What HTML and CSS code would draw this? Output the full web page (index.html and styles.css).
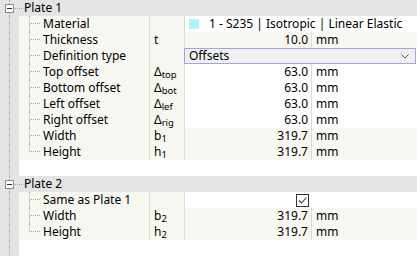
FILE: index.html
```html
<!DOCTYPE html>
<html>
<head>
    <meta name="viewport" content="width=device-width, initial-scale=1">
    <link rel="stylesheet" href="styles.css">
</head>
<body>

<div class="panel">
    <div class="head">
        <div class="tg"><span class="vl"></span><span class="box"></span><span class="vl"></span></div>
        <span class="hl"></span>
        <span class="title">Plate 1</span>
    </div>
    <div class="row">
        <div class="gut"><span class="vl"></span></div>
        <div class="name"><span class="br"><i></i><i></i></span>Material</div>
        <div class="sym"></div>
        <div class="val mat"><span class="swatch"></span>1 - S235 | Isotropic | Linear Elastic</div>
    </div>
    <div class="row ro">
        <div class="gut"><span class="vl"></span></div>
        <div class="name"><span class="br"><i></i><i></i></span>Thickness</div>
        <div class="sym">t</div>
        <div class="val"><span class="num">10.0</span><span class="unit">mm</span></div>
    </div>
    <div class="row">
        <div class="gut"><span class="vl"></span></div>
        <div class="name"><span class="br"><i></i><i></i></span>Definition type</div>
        <div class="sym"></div>
        <div class="val"><div class="select">Offsets
            <svg width="8" height="5" viewBox="0 0 8 5"><path d="M0.5 0.5 L4 4 L7.5 0.5" fill="none" stroke="#5a5a5a" stroke-width="1"/></svg>
        </div></div>
    </div>
    <div class="row">
        <div class="gut"><span class="vl"></span></div>
        <div class="name"><span class="br"><i></i><i></i></span>Top offset</div>
        <div class="sym">&Delta;<sub>top</sub></div>
        <div class="val"><span class="num">63.0</span><span class="unit">mm</span></div>
    </div>
    <div class="row">
        <div class="gut"><span class="vl"></span></div>
        <div class="name"><span class="br"><i></i><i></i></span>Bottom offset</div>
        <div class="sym">&Delta;<sub>bot</sub></div>
        <div class="val"><span class="num">63.0</span><span class="unit">mm</span></div>
    </div>
    <div class="row">
        <div class="gut"><span class="vl"></span></div>
        <div class="name"><span class="br"><i></i><i></i></span>Left offset</div>
        <div class="sym">&Delta;<sub>lef</sub></div>
        <div class="val"><span class="num">63.0</span><span class="unit">mm</span></div>
    </div>
    <div class="row">
        <div class="gut"><span class="vl"></span></div>
        <div class="name"><span class="br"><i></i><i></i></span>Right offset</div>
        <div class="sym">&Delta;<sub>rig</sub></div>
        <div class="val"><span class="num">63.0</span><span class="unit">mm</span></div>
    </div>
    <div class="row ro">
        <div class="gut"><span class="vl"></span></div>
        <div class="name"><span class="br"><i></i><i></i></span>Width</div>
        <div class="sym">b<sub>1</sub></div>
        <div class="val"><span class="num">319.7</span><span class="unit">mm</span></div>
    </div>
    <div class="row ro last">
        <div class="gut"><span class="vl"></span></div>
        <div class="name"><span class="br"><i></i><i></i></span>Height</div>
        <div class="sym">h<sub>1</sub></div>
        <div class="val"><span class="num">319.7</span><span class="unit">mm</span></div>
    </div>
    <div class="row blank">
        <div class="gut"><span class="vl"></span></div>
    </div>

    <div class="head">
        <div class="tg"><span class="vl"></span><span class="box"></span><span class="vl"></span></div>
        <span class="hl"></span>
        <span class="title">Plate 2</span>
    </div>
    <div class="row">
        <div class="gut"><span class="vl"></span></div>
        <div class="name"><span class="br"><i></i><i></i></span>Same as Plate 1</div>
        <div class="sym"></div>
        <div class="val check">
            <svg width="13" height="13" viewBox="0 0 13 13"><rect x="0.5" y="0.5" width="12" height="12" fill="#fff" stroke="#333"/><path d="M3 6.5 L5.5 9 L10.5 3.5" fill="none" stroke="#333" stroke-width="1.1"/></svg>
        </div>
    </div>
    <div class="row ro">
        <div class="gut"><span class="vl"></span></div>
        <div class="name"><span class="br"><i></i><i></i></span>Width</div>
        <div class="sym">b<sub>2</sub></div>
        <div class="val"><span class="num">319.7</span><span class="unit">mm</span></div>
    </div>
    <div class="row ro last">
        <div class="gut"><span class="vl"></span></div>
        <div class="name"><span class="br"><i></i><i></i></span>Height</div>
        <div class="sym">h<sub>2</sub></div>
        <div class="val"><span class="num">319.7</span><span class="unit">mm</span></div>
    </div>
    <div class="row blank">
        <div class="gut"><span class="vl"></span></div>
    </div>
</div>

</body>
</html>
```

FILE: styles.css
```css
body {
  margin: 0;
  font-family: "Noto Sans", Arial, sans-serif;
  font-size: 12px;
  color: #000;
  background: #fff;
}
* {
  box-sizing: border-box;
}
.panel {
  width: 417px;
  height: 256px;
  overflow: hidden;
}

/* group header */
.head {
  display: flex;
  align-items: center;
  height: 16px;
  background: #e4e4e4;
}
.tg {
  width: 19px;
  height: 16px;
  display: flex;
  flex-direction: column;
  align-items: center;
}
.tg .vl {
  flex: 1;
  width: 1px;
  border-left: 1px dotted #a8a8a8;
}
.box {
  width: 9px;
  height: 9px;
  border: 1px solid #8c8c8c;
  background: #fff;
  display: flex;
  align-items: center;
  justify-content: center;
}
.box:after {
  content: "";
  width: 5px;
  height: 1px;
  background: #333;
}
.hl {
  width: 7px;
  margin-left: -4px;
  border-top: 1px dotted #a8a8a8;
}
.title {
  margin-left: 2px;
  line-height: 16px;
}

/* rows */
.row {
  display: flex;
  height: 16px;
  line-height: 16px;
}
.gut {
  width: 19px;
  background: #e4e4e4;
  display: flex;
  justify-content: center;
}
.gut .vl {
  width: 1px;
  border-left: 1px dotted #a8a8a8;
}
.name {
  width: 131px;
  display: flex;
  align-items: center;
  background: #f7f7f1;
  border-right: 1px solid #dcdcd6;
  padding-left: 10px;
  white-space: nowrap;
}
.br {
  width: 11px;
  height: 16px;
  margin-right: 3px;
  display: flex;
  flex-direction: column;
}
.br i {
  height: 8px;
  border-left: 1px dotted #a8a8a8;
}
.br i:first-child {
  border-bottom: 1px dotted #a8a8a8;
}
.last .br i:last-child {
  border-left: none;
}
.sym {
  width: 35px;
  background: #f7f7f1;
  border-right: 1px solid #dcdcd6;
  padding-left: 4px;
  white-space: nowrap;
}
sub {
  font-size: 9.5px;
  vertical-align: -2px;
  line-height: 0;
}
.val {
  flex: 1;
  display: flex;
  background: #fff;
}
.ro .val {
  background: #f7f7f1;
}
.num {
  width: 126px;
  text-align: right;
  padding-right: 3px;
}
.unit {
  flex: 1;
  border-left: 1px solid #dcdcd6;
  padding-left: 4px;
}
.mat {
  align-items: center;
  white-space: nowrap;
}
.swatch {
  width: 10px;
  height: 10px;
  background: #a8f6fa;
  margin: 0 10px 0 4px;
}
.select {
  flex: 1;
  margin: 0 1px 0 -1px;
  height: 16px;
  border: 1px solid #a4a4e4;
  background: #f0f0f0;
  padding-left: 4px;
  line-height: 14px;
  display: flex;
  align-items: center;
  justify-content: space-between;
  padding-right: 6px;
}
.check {
  justify-content: center;
  align-items: center;
  padding-left: 2px;
}
.check svg {
  display: block;
}
.blank .gut {
  height: 16px;
}
.blank:last-child {
  height: 80px;
}
```
